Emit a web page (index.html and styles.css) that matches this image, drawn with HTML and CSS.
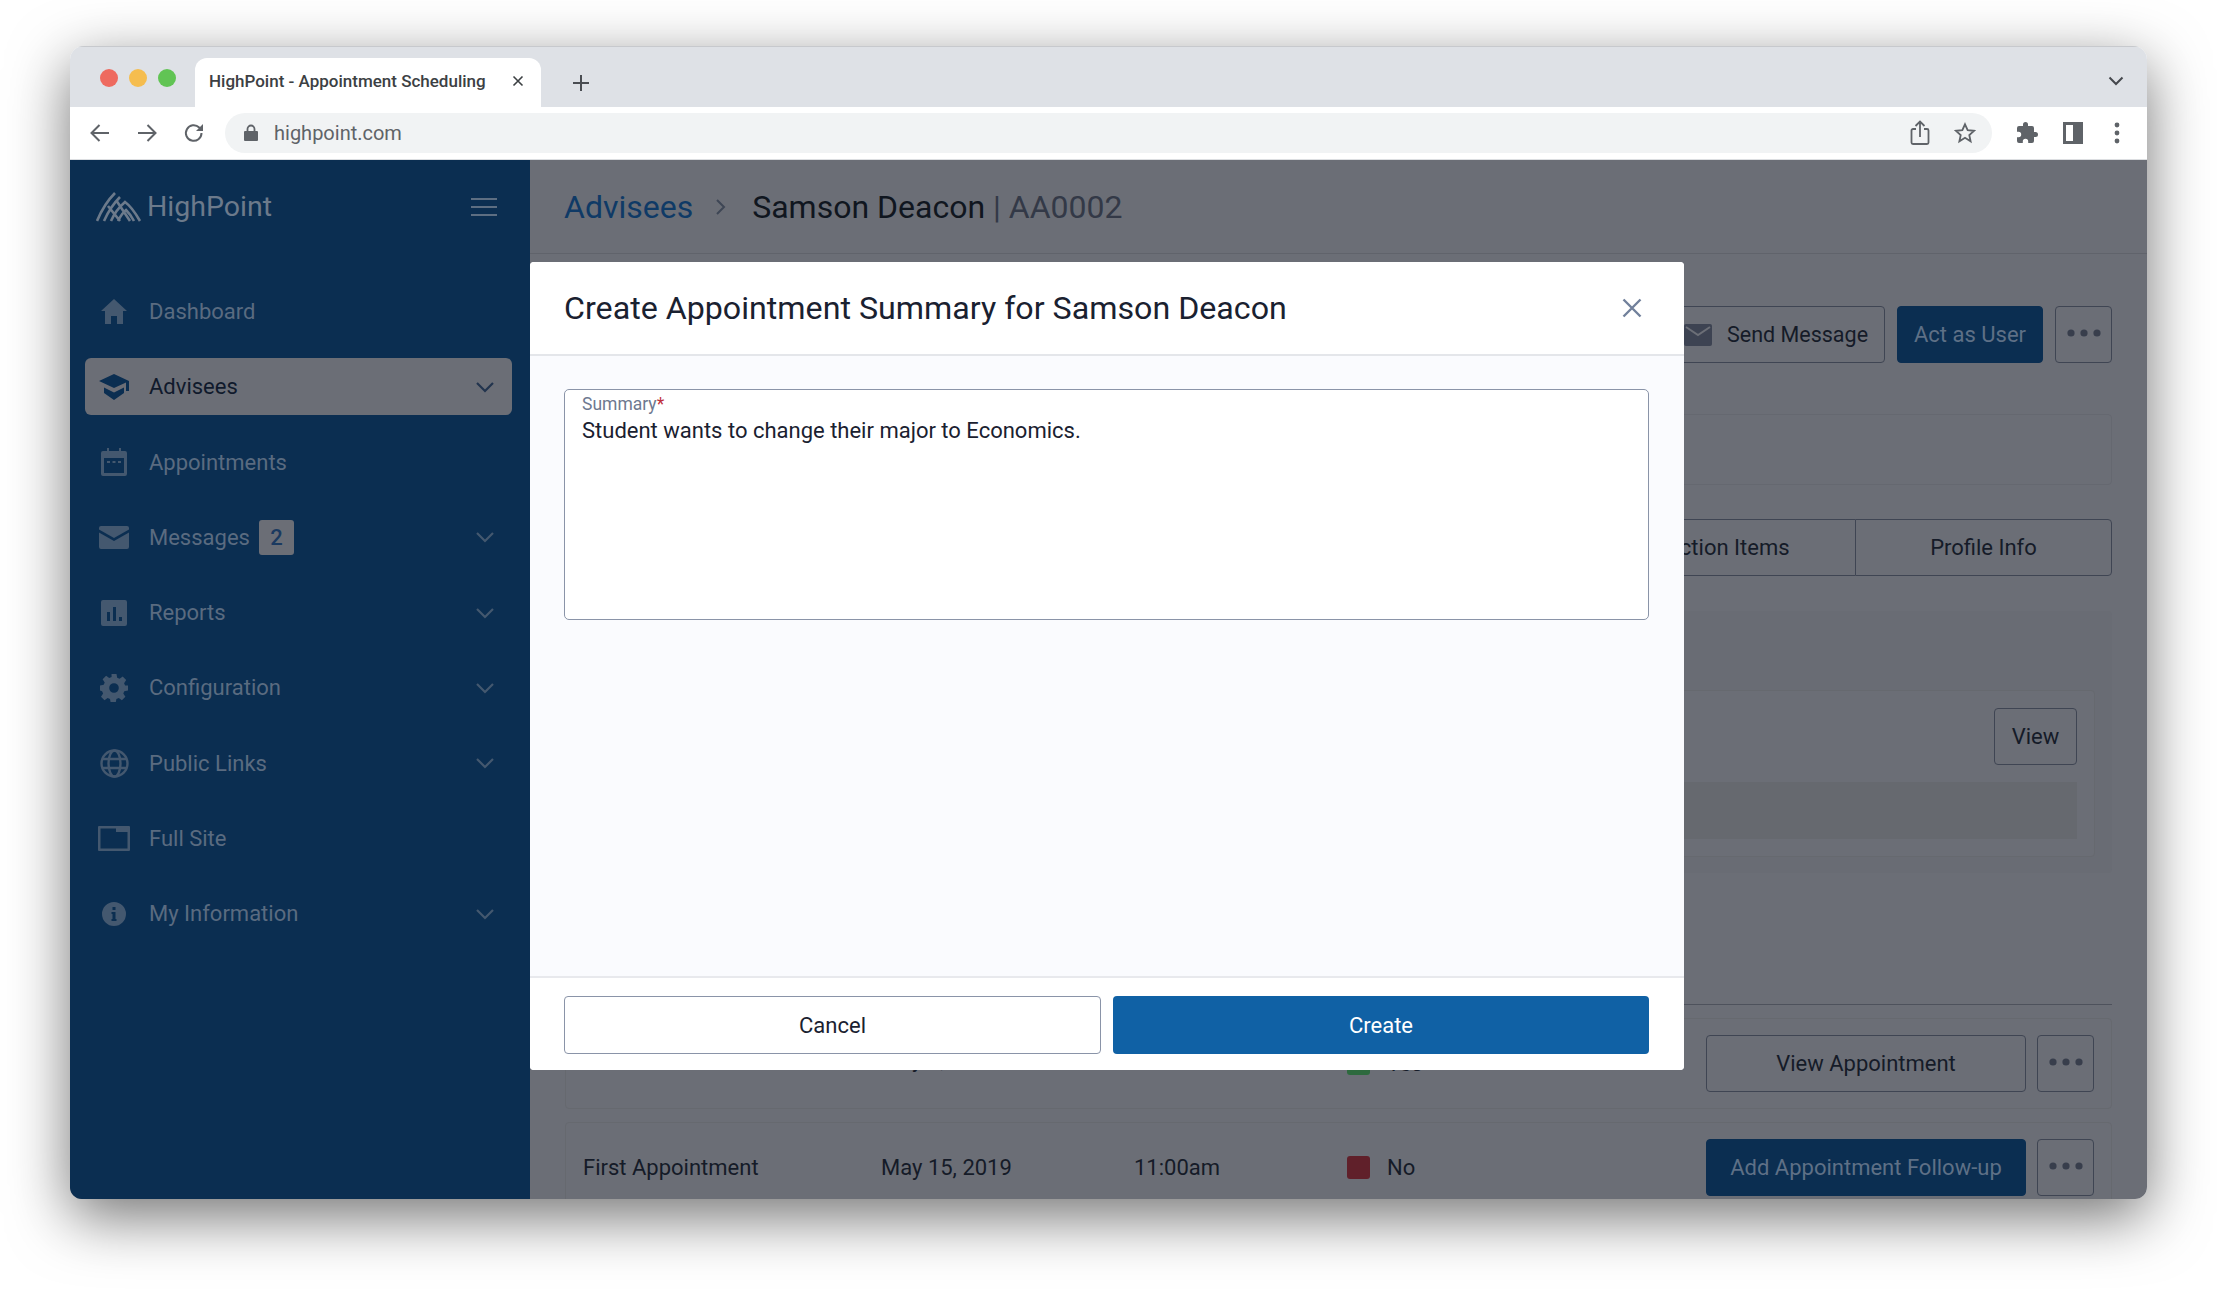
FILE: index.html
```html
<!DOCTYPE html>
<html lang="en">
<head>
  <meta charset="UTF-8">
  <meta name="viewport" content="width=device-width, initial-scale=1.0">
  <title>HighPoint - Appointment Scheduling</title>
  <link rel="stylesheet" href="styles.css">
</head>
<body>
  <svg class="defs" width="0" height="0">
    <symbol id="chev" viewBox="0 0 20 12"><path d="M2 2l8 8 8-8" fill="none" stroke="currentColor" stroke-width="2.2"/></symbol>
    <symbol id="dots" viewBox="0 0 36 8"><circle cx="5" cy="4" r="3.6"/><circle cx="18" cy="4" r="3.6"/><circle cx="31" cy="4" r="3.6"/></symbol>
  </svg>

  <div class="window">
    <div class="tabstrip">
      <div class="lights"><i class="red"></i><i class="yellow"></i><i class="green"></i></div>
      <div class="tab">
        <span>HighPoint - Appointment Scheduling</span>
        <svg class="tab-x" width="12" height="12" viewBox="0 0 12 12"><path d="M1.5 1.5l9 9M10.5 1.5l-9 9" stroke="#3c4043" stroke-width="1.6"/></svg>
      </div>
      <svg class="tab-plus" width="18" height="18" viewBox="0 0 18 18"><path d="M9 1v16M1 9h16" stroke="#4a4d52" stroke-width="2"/></svg>
      <svg class="tab-more" width="16" height="10" viewBox="0 0 16 10"><path d="M1.5 1.5L8 8l6.5-6.5" fill="none" stroke="#45484d" stroke-width="2"/></svg>
    </div>

    <div class="toolbar">
      <svg class="nav" width="22" height="22" viewBox="0 0 22 22"><path d="M20 11H3M10.5 3L2.5 11l8 8" fill="none" stroke="#5f6368" stroke-width="2"/></svg>
      <svg class="nav" width="22" height="22" viewBox="0 0 22 22"><path d="M2 11h17M11.5 3l8 8-8 8" fill="none" stroke="#5f6368" stroke-width="2"/></svg>
      <svg class="nav" width="22" height="22" viewBox="0 0 22 22"><path d="M18.5 11a7.8 7.8 0 1 1-2.3-5.500L19 8" fill="none" stroke="#5f6368" stroke-width="2"/><path d="M20 2v7h-7z" fill="#5f6368"/></svg>
      <div class="urlbar">
        <svg width="14" height="18" viewBox="0 0 14 18"><path d="M1 7h12a1 1 0 0 1 1 1v8a1 1 0 0 1-1 1H1a1 1 0 0 1-1-1V8a1 1 0 0 1 1-1z" fill="#5f6368"/><path d="M3.5 7V5a3.5 3.5 0 0 1 7 0v2" fill="none" stroke="#5f6368" stroke-width="1.8"/></svg>
        <span class="url">highpoint.com</span>
        <svg class="share" width="20" height="26" viewBox="0 0 20 26"><path d="M6 9H3a1.5 1.5 0 0 0-1.5 1.5v12A1.5 1.5 0 0 0 3 24h14a1.5 1.5 0 0 0 1.5-1.5v-12A1.5 1.5 0 0 0 17 9h-3" fill="none" stroke="#5f6368" stroke-width="1.8"/><path d="M10 17V2M5.5 6L10 1.5 14.5 6" fill="none" stroke="#5f6368" stroke-width="1.8"/></svg>
        <svg width="22" height="22" viewBox="0 0 24 24"><path d="M12 2.5l2.900 6.300 6.900.8-5.100 4.700 1.400 6.800L12 17.200l-6.100 3.900 1.400-6.800-5.100-4.700 6.900-.8z" fill="none" stroke="#5f6368" stroke-width="2"/></svg>
      </div>
      <svg class="puzzle" width="24" height="24" viewBox="0 0 24 24"><path d="M20.5 11H19V7a2 2 0 0 0-2-2h-4V3.5a2.5 2.5 0 0 0-5 0V5H4a2 2 0 0 0-2 2v3.800h1.500a2.700 2.700 0 0 1 0 5.400H2V20a2 2 0 0 0 2 2h3.800v-1.500a2.700 2.700 0 0 1 5.400 0V22H17a2 2 0 0 0 2-2v-4h1.500a2.500 2.500 0 0 0 0-5z" fill="#5f6368"/></svg>
      <svg width="20" height="22" viewBox="0 0 20 22"><path d="M0 0h20v22H0z" fill="#5f6368"/><path d="M3 3h7v16H3z" fill="#fff"/></svg>
      <svg class="kebab" width="6" height="22" viewBox="0 0 6 22"><circle cx="3" cy="3" r="2.4" fill="#5f6368"/><circle cx="3" cy="11" r="2.4" fill="#5f6368"/><circle cx="3" cy="19" r="2.4" fill="#5f6368"/></svg>
    </div>

    <div class="app">
      <aside class="sidebar">
        <div class="brand">
          <svg width="46" height="30" viewBox="0 0 46 30"><path d="M1 29C6 17 12 8 19 1M8 29C12 20 17 12 24 5M15 29c3-7 7-13 14-19 7 5 11 12 15 19M22 29c2-4 4-8 8-11 3 3 6 7 8 11M12 14l12 15M20 8l14 21" fill="none" stroke="#6c7a8b" stroke-width="2.6"/></svg>
          <span class="brand-name">HighPoint</span>
          <svg class="burger" width="26" height="20" viewBox="0 0 26 20"><path d="M0 2h26M0 10h26M0 18h26" stroke="#5d6e82" stroke-width="2.2"/></svg>
        </div>
        <nav class="menu">
          <a class="item">
            <span class="ico"><svg width="26" height="25" viewBox="0 0 26 25"><path d="M13 0L0 12h4v13h6v-8h6v8h6V12h4z"/></svg></span>
            <span>Dashboard</span>
          </a>
          <a class="item active">
            <span class="ico"><svg width="30" height="26" viewBox="0 0 30 26"><path d="M15 0L0 7l15 7 12-5.600V17h3V7z"/><path d="M5 13.5V19l10 7 10-7v-5.500L15 18.500z"/></svg></span>
            <span>Advisees</span>
            <svg class="chev"><use href="#chev"/></svg>
          </a>
          <a class="item">
            <span class="ico"><svg width="26" height="28" viewBox="0 0 26 28"><path fill-rule="evenodd" d="M2 3h4V0h2v3h10V0h2v3h4a2 2 0 0 1 2 2v21a2 2 0 0 1-2 2H2a2 2 0 0 1-2-2V5a2 2 0 0 1 2-2zm1 7v15h20V10z"/><path d="M6 13h3v2H6zm5.5 0h3v2h-3zm5.5 0h3v2h-3z"/></svg></span>
            <span>Appointments</span>
          </a>
          <a class="item">
            <span class="ico"><svg width="30" height="23" viewBox="0 0 30 23"><path d="M2 0h26a2 2 0 0 1 2 2v1.500L15 12 0 3.500V2a2 2 0 0 1 2-2z"/><path d="M0 6.5l15 8.500 15-8.500V21a2 2 0 0 1-2 2H2a2 2 0 0 1-2-2z"/></svg></span>
            <span>Messages</span>
            <b class="badge">2</b>
            <svg class="chev"><use href="#chev"/></svg>
          </a>
          <a class="item">
            <span class="ico"><svg width="26" height="26" viewBox="0 0 26 26"><path fill-rule="evenodd" d="M2 0h22a2 2 0 0 1 2 2v22a2 2 0 0 1-2 2H2a2 2 0 0 1-2-2V2a2 2 0 0 1 2-2zm4 12v9h3v-9zm6-5v14h3V7zm6 10v4h3v-4z"/></svg></span>
            <span>Reports</span>
            <svg class="chev"><use href="#chev"/></svg>
          </a>
          <a class="item">
            <span class="ico"><svg width="28" height="28" viewBox="0 0 28 28"><path fill-rule="evenodd" d="M11.5 0h5l.7 3.700 2.400 1 3.100-2.100 3.500 3.500-2.100 3.100 1 2.400L28 11.500v5l-3.700.7-1 2.400 2.100 3.100-3.500 3.500-3.100-2.100-2.400 1-.7 3.700h-5l-.7-3.700-2.400-1-3.100 2.100-3.500-3.500 2.100-3.100-1-2.400L0 16.500v-5l3.700-.7 1-2.400-2.100-3.100 3.500-3.500 3.100 2.100 2.400-1zM14 9.200a4.800 4.800 0 1 0 0 9.600 4.800 4.800 0 0 0 0-9.600z"/></svg></span>
            <span>Configuration</span>
            <svg class="chev"><use href="#chev"/></svg>
          </a>
          <a class="item">
            <span class="ico"><svg width="29" height="29" viewBox="0 0 29 29" fill="none" stroke="#44586f" stroke-width="2.4"><circle cx="14.5" cy="14.5" r="13"/><ellipse cx="14.5" cy="14.5" rx="6" ry="13"/><path d="M2 10h25M2 19h25"/></svg></span>
            <span>Public Links</span>
            <svg class="chev"><use href="#chev"/></svg>
          </a>
          <a class="item">
            <span class="ico"><svg width="32" height="25" viewBox="0 0 32 25"><path fill-rule="evenodd" d="M1 0h30a1 1 0 0 1 1 1v23a1 1 0 0 1-1 1H1a1 1 0 0 1-1-1V1a1 1 0 0 1 1-1zm1.5 2.500v20h27V6H18V2.500z"/></svg></span>
            <span>Full Site</span>
          </a>
          <a class="item">
            <span class="ico"><svg width="24" height="24" viewBox="0 0 24 24"><path fill-rule="evenodd" d="M12 0a12 12 0 1 1 0 24 12 12 0 0 1 0-24zm-1.500 5v3h3V5zM9.500 10v2h1v5h-1v2h5v-2h-1v-7z"/></svg></span>
            <span>My Information</span>
            <svg class="chev"><use href="#chev"/></svg>
          </a>
        </nav>
      </aside>

      <main class="content">
        <header class="crumbs">
          <span class="crumb-link">Advisees</span>
          <svg width="12" height="18" viewBox="0 0 12 18"><path d="M2 2l7 7-7 7" fill="none" stroke="#3e4655" stroke-width="2"/></svg>
          <span class="crumb-name">Samson Deacon <em>| AA0002</em></span>
        </header>

        <div class="page">
          <div class="actions">
            <button class="btn send">
              <svg width="28" height="22" viewBox="0 0 28 22"><path d="M2 0h24a2 2 0 0 1 2 2v18a2 2 0 0 1-2 2H2a2 2 0 0 1-2-2V2a2 2 0 0 1 2-2z" fill="#3d4352"/><path d="M2 3l12 8 12-8" fill="none" stroke="#6c6f77" stroke-width="2"/></svg>
              Send Message
            </button>
            <button class="btn navy act">Act as User</button>
            <button class="btn more"><svg class="dots"><use href="#dots"/></svg></button>
          </div>

          <div class="band"></div>

          <div class="tabs">
            <div class="seg seg-left">Action Items</div>
            <div class="seg seg-right">Profile Info</div>
          </div>

          <section class="outer">
            <div class="card">
              <div class="card-top"><button class="btn view">View</button></div>
              <div class="strip"></div>
            </div>
          </section>

          <div class="rows">
            <div class="row row-first">
              <span class="cell-name">Initial Appointment</span>
              <span class="cell-date">May 1, 2019</span>
              <span class="cell-time">10:00am</span>
              <span class="cell-flag"><i class="sq yes"></i>Yes</span>
              <button class="btn wide">View Appointment</button>
              <button class="btn more small"><svg class="dots"><use href="#dots"/></svg></button>
            </div>
            <div class="row">
              <span class="cell-name">First Appointment</span>
              <span class="cell-date">May 15, 2019</span>
              <span class="cell-time">11:00am</span>
              <span class="cell-flag"><i class="sq no"></i>No</span>
              <button class="btn navy wide">Add Appointment Follow-up</button>
              <button class="btn more small"><svg class="dots"><use href="#dots"/></svg></button>
            </div>
          </div>
        </div>
      </main>
    </div>

    <div class="modal">
      <div class="modal-head">
        <h2>Create Appointment Summary for Samson Deacon</h2>
        <svg width="20" height="20" viewBox="0 0 20 20"><path d="M1.5 1.5l17 17M18.5 1.5l-17 17" stroke="#71809b" stroke-width="2.4"/></svg>
      </div>
      <div class="modal-body">
        <div class="field">
          <label>Summary<span>*</span></label>
          <p>Student wants to change their major to Economics.</p>
        </div>
      </div>
      <div class="modal-foot">
        <button class="foot-btn cancel">Cancel</button>
        <button class="foot-btn create">Create</button>
      </div>
    </div>
  </div>
</body>
</html>
```

FILE: styles.css
```css
* {
  box-sizing: border-box;
}

body {
  margin: 0;
  height: 1292px;
  overflow: hidden;
  background-color: #fff;
  font-family: "Roboto", "Liberation Sans", sans-serif;
}

.defs {
  position: absolute;
}

button {
  font-family: inherit;
}

/* browser frame */
.window {
  position: relative;
  display: flex;
  flex-direction: column;
  width: 2077px;
  height: 1153px;
  margin: 46px 0 0 70px;
  border-radius: 14px 14px 12px 12px;
  overflow: hidden;
  box-shadow: 0 18px 60px rgba(0,0,0,0.55);
}

.tabstrip {
  display: flex;
  align-items: flex-end;
  flex: none;
  height: 61px;
  background-color: #dee1e6;
  border-top: 1px solid #c7c9cd;
}

.lights {
  display: flex;
  gap: 11px;
  align-self: flex-start;
  margin: 22px 0 0 30px;
}

.lights i {
  width: 18px;
  height: 18px;
  border-radius: 50%;
}

.red { background-color: #ee6a5f; }
.yellow { background-color: #f5bd4f; }
.green { background-color: #61c454; }

.tab {
  display: flex;
  align-items: center;
  justify-content: space-between;
  width: 346px;
  height: 49px;
  margin-left: 19px;
  padding: 0 17px 3px 14px;
  background-color: #fff;
  border-radius: 12px 12px 0 0;
  font-size: 17px;
  font-weight: 500;
  color: #3c4043;
  white-space: nowrap;
}

.tab-plus {
  margin: 0 0 15px 31px;
}

.tab-more {
  margin: 0 23px 21px auto;
}

.toolbar {
  display: flex;
  align-items: center;
  flex: none;
  height: 53px;
  padding-left: 19px;
  background-color: #fff;
  border-bottom: 1px solid #dcdee1;
}

.nav {
  margin-right: 25px;
}

.urlbar {
  display: flex;
  align-items: center;
  gap: 16px;
  width: 1767px;
  height: 40px;
  margin-left: -5px;
  padding: 0 16px 0 19px;
  background-color: #f1f3f4;
  border-radius: 20px;
}

.url {
  flex: 1;
  font-size: 20px;
  color: #5f6368;
}

.share {
  margin-right: 8px;
}

.puzzle {
  margin: 0 24px 0 23px;
}

.kebab {
  margin-left: 31px;
}

/* app */
.app {
  display: flex;
  flex: 1;
  min-height: 0;
  background-color: #6b6e76;
}

.sidebar {
  flex: none;
  width: 460px;
  background-color: #0b2e51;
}

.brand {
  display: flex;
  align-items: center;
  height: 93px;
  padding: 0 33px 0 26px;
}

.brand-name {
  flex: 1;
  margin-left: 5px;
  font-size: 28.5px;
  color: #6c7a8b;
}

.menu {
  display: flex;
  flex-direction: column;
  gap: 18.3px;
  margin-top: 30px;
  padding: 0 18px 0 15px;
}

.item {
  display: flex;
  align-items: center;
  height: 57px;
  padding: 0 17px 0 0;
  border-radius: 6px;
  font-size: 22px;
  color: #5a6b80;
}

.ico {
  display: flex;
  justify-content: center;
  flex: none;
  width: 58px;
  margin-right: 6px;
  fill: #44586f;
}

.chev {
  width: 20px;
  height: 12px;
  margin-left: auto;
  color: #44586f;
}

.active {
  background-color: #6b6e76;
  color: #101a2c;
}

.active .ico {
  fill: #0b2e51;
}

.active .chev {
  color: #22344e;
}

.badge {
  width: 35px;
  height: 35px;
  margin-left: 9px;
  border-radius: 3px;
  background-color: #6b6e76;
  color: #1b3a60;
  font-size: 22px;
  font-weight: 500;
  line-height: 35px;
  text-align: center;
}

/* page behind the dialog */
.content {
  flex: 1;
  min-width: 0;
}

.crumbs {
  display: flex;
  align-items: center;
  gap: 22px;
  height: 94px;
  padding-left: 34px;
  border-bottom: 1px solid #60636b;
  font-size: 32px;
}

.crumb-link {
  color: #0f3a66;
}

.crumb-name {
  margin-left: 3px;
  color: #10161f;
}

.crumb-name em {
  font-style: normal;
  color: #333947;
}

.page {
  padding: 52px 35px 0;
}

.btn {
  height: 57px;
  background: transparent;
  border: 1.5px solid #3f4553;
  border-radius: 4px;
  font-size: 22px;
  color: #151b28;
}

.navy {
  background-color: #0b2e51;
  border-color: #0b2e51;
  color: #5e7086;
}

.actions {
  display: flex;
  justify-content: flex-end;
  gap: 12px;
}

.send {
  display: flex;
  align-items: center;
  gap: 15px;
  width: 228px;
  padding: 0 0 0 26px;
  font-size: 21.5px;
}

.act {
  width: 146px;
}

.more {
  display: flex;
  align-items: center;
  justify-content: center;
  width: 57px;
}

.dots {
  width: 36px;
  height: 8px;
  margin-bottom: 4px;
  fill: #383e4c;
}

.band {
  height: 71px;
  margin-top: 51px;
  border: 1px solid #656870;
  border-radius: 4px;
}

.tabs {
  display: flex;
  justify-content: flex-end;
  margin-top: 34px;
}

.seg {
  height: 57px;
  border: 1.5px solid #3f4553;
  font-size: 22px;
  line-height: 55px;
  text-align: center;
  color: #151b28;
}

.seg-left {
  width: 256px;
  border-right: 0;
}

.seg-right {
  width: 257px;
  border-radius: 0 4px 4px 0;
}

.outer {
  height: 262px;
  margin-top: 35px;
  padding-top: 79px;
  background-color: #696c74;
  border-radius: 4px;
}

.card {
  height: 167px;
  margin: 0 17px;
  padding: 17px 17px 0;
  background-color: #6b6e76;
  border: 1px solid #66696f;
  border-radius: 4px;
}

.card-top {
  display: flex;
  justify-content: flex-end;
}

.view {
  width: 83px;
}

.strip {
  height: 57px;
  margin-top: 17px;
  background-color: #66696f;
}

.rows {
  display: flex;
  flex-direction: column;
  gap: 13px;
  margin-top: 131px;
  padding-top: 13px;
  border-top: 1.5px solid #4e525c;
}

.row {
  display: flex;
  align-items: center;
  height: 91px;
  padding: 0 17px;
  border: 1px solid #66696f;
  border-radius: 4px;
  font-size: 22px;
  color: #151b28;
}

.row-first span {
  margin-bottom: 9px;
}

.row-first .cell-name {
  margin-bottom: 12px;
}

.row-first .cell-flag {
  margin-bottom: 0;
}

.cell-name {
  width: 298px;
}

.cell-date {
  width: 253px;
}

.cell-time {
  width: 213px;
}

.cell-flag {
  display: flex;
  align-items: center;
  gap: 17px;
  width: 359px;
}

.sq {
  width: 23px;
  height: 23px;
  border-radius: 3px;
}

.yes { background-color: #2d6a3e; }
.no { background-color: #60202a; }

.wide {
  width: 320px;
  flex: none;
}

.small {
  flex: none;
  margin-left: 11px;
}

/* dialog */
.modal {
  position: absolute;
  left: 460px;
  top: 216px;
  display: flex;
  flex-direction: column;
  width: 1154px;
  height: 808px;
  background-color: #fafbfe;
  border-radius: 4px;
  overflow: hidden;
}

.modal-head {
  display: flex;
  align-items: center;
  justify-content: space-between;
  flex: none;
  height: 94px;
  padding: 0 42px 0 34px;
  background-color: #fff;
  border-bottom: 2px solid #e4e6ea;
}

.modal-head h2 {
  margin: 0;
  font-size: 32.2px;
  font-weight: 400;
  color: #1a2130;
}

.modal-body {
  flex: 1;
  padding: 33px 35px 34px 34px;
}

.field {
  height: 231px;
  padding: 4px 17px;
  background-color: #fff;
  border: 1.5px solid #8a94a8;
  border-radius: 5px;
}

.field label {
  display: block;
  font-size: 17.5px;
  line-height: 21px;
  color: #6e7990;
}

.field label span {
  color: #c0303c;
}

.field p {
  margin: 0;
  font-size: 22px;
  line-height: 32px;
  color: #1a2130;
}

.modal-foot {
  display: flex;
  gap: 12px;
  flex: none;
  height: 94px;
  padding: 18px 35px 0 34px;
  background-color: #fff;
  border-top: 2px solid #e8e9ed;
}

.foot-btn {
  flex: 1;
  height: 58px;
  border-radius: 4px;
  font-size: 22px;
}

.cancel {
  flex: none;
  width: 537px;
  background-color: #fff;
  border: 1.5px solid #8a94a8;
  color: #1a2130;
}

.create {
  background-color: #1061a5;
  border: 0;
  color: #fff;
}
```
